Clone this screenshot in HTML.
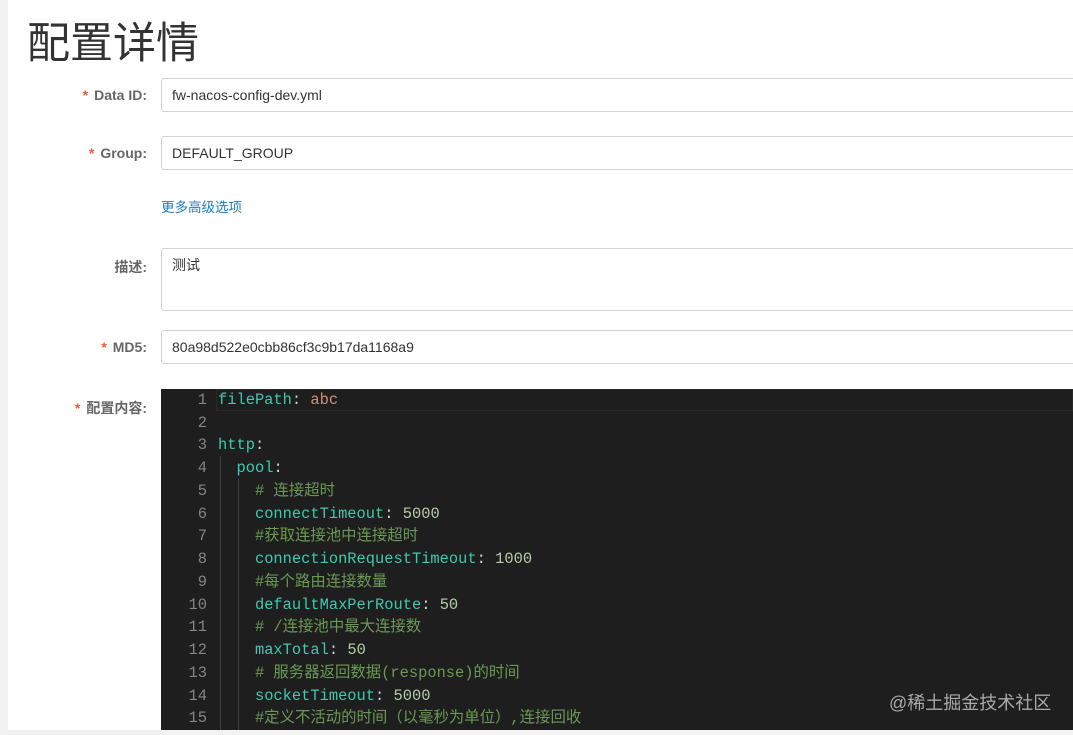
<!DOCTYPE html><html><head><meta charset="utf-8"><style>
body{margin:0;width:1073px;height:735px;overflow:hidden;background:#fff;font-family:"Liberation Sans","Noto Sans CJK SC",sans-serif;position:relative}
.strip{position:absolute;left:0;top:0;width:8px;height:735px;background:#f2f2f2}
.bot{position:absolute;left:0;top:730px;width:1073px;height:5px;background:#f2f2f2}
h1{position:absolute;left:27px;top:16px;margin:0;font-weight:normal;font-size:43px;color:#333;line-height:56px}
.lb{position:absolute;right:926px;font-size:14px;font-weight:bold;color:#666;white-space:nowrap}
.lb i{color:#f1592a;font-style:normal;margin-right:6px}
.in{position:absolute;left:161px;width:930px;border:1px solid #d2d2d2;border-radius:3px;box-sizing:border-box;font-size:14px;color:#333;padding-left:10px}
.lnk{position:absolute;left:161px;top:196px;font-size:13.5px;color:#1e7dbf}
.ed{position:absolute;left:161px;top:389px;width:912px;height:341px;background:#1e1e1e;font-family:"Liberation Mono","Noto Sans CJK SC",monospace;font-size:15.4px}
.l{position:absolute;left:0;height:23px;line-height:23px;white-space:pre;width:912px}
.n{display:inline-block;width:46px;text-align:right;color:#858585}
.c{position:absolute;left:57px}
.k{color:#3dc9b0}.p{color:#d4d4d4}.s{color:#ce9178}.m{color:#b5cea8}.g{color:#6a9955}
.gd{position:absolute;width:1px;background:#404040}
.wm{position:absolute;left:889px;top:689px;font-size:18px;color:#a9a9a9}
</style></head><body>
<div class="strip"></div>
<h1>配置详情</h1>
<div class="lb" style="top:87px"><i>*</i>Data ID:</div>
<div class="in" style="top:78px;height:34px;line-height:32px">fw-nacos-config-dev.yml</div>
<div class="lb" style="top:145px"><i>*</i>Group:</div>
<div class="in" style="top:136px;height:34px;line-height:32px">DEFAULT_GROUP</div>
<div class="lnk">更多高级选项</div>
<div class="lb" style="top:257px">描述:</div>
<div class="in" style="top:248px;height:63px;padding-top:7px;line-height:18px">测试</div>
<div class="lb" style="top:339px"><i>*</i>MD5:</div>
<div class="in" style="top:330px;height:34px;line-height:32px">80a98d522e0cbb86cf3c9b17da1168a9</div>
<div class="lb" style="top:398px"><i>*</i>配置内容:</div>
<div class="ed">
<div style="position:absolute;left:55px;top:0;width:857px;height:22px;border:1px solid #282828;box-sizing:border-box"></div>
<div class="gd" style="left:59px;top:67px;height:274px"></div>
<div class="gd" style="left:77px;top:90px;height:251px"></div>
<div class="l" style="top:0px"><span class="n">1</span><span class="c"><span class="k">filePath</span><span class="p">: </span><span class="s">abc</span></span></div>
<div class="l" style="top:23px"><span class="n">2</span></div>
<div class="l" style="top:45px"><span class="n">3</span><span class="c"><span class="k">http</span><span class="p">:</span></span></div>
<div class="l" style="top:68px"><span class="n">4</span><span class="c">  <span class="k">pool</span><span class="p">:</span></span></div>
<div class="l" style="top:91px"><span class="n">5</span><span class="c g">    # 连接超时</span></div>
<div class="l" style="top:114px"><span class="n">6</span><span class="c">    <span class="k">connectTimeout</span><span class="p">: </span><span class="m">5000</span></span></div>
<div class="l" style="top:136px"><span class="n">7</span><span class="c g">    #获取连接池中连接超时</span></div>
<div class="l" style="top:159px"><span class="n">8</span><span class="c">    <span class="k">connectionRequestTimeout</span><span class="p">: </span><span class="m">1000</span></span></div>
<div class="l" style="top:182px"><span class="n">9</span><span class="c g">    #每个路由连接数量</span></div>
<div class="l" style="top:205px"><span class="n">10</span><span class="c">    <span class="k">defaultMaxPerRoute</span><span class="p">: </span><span class="m">50</span></span></div>
<div class="l" style="top:227px"><span class="n">11</span><span class="c g">    # /连接池中最大连接数</span></div>
<div class="l" style="top:250px"><span class="n">12</span><span class="c">    <span class="k">maxTotal</span><span class="p">: </span><span class="m">50</span></span></div>
<div class="l" style="top:273px"><span class="n">13</span><span class="c g">    # 服务器返回数据(response)的时间</span></div>
<div class="l" style="top:296px"><span class="n">14</span><span class="c">    <span class="k">socketTimeout</span><span class="p">: </span><span class="m">5000</span></span></div>
<div class="l" style="top:318px"><span class="n">15</span><span class="c g">    #定义不活动的时间（以毫秒为单位）,连接回收</span></div>
</div>
<div class="wm">@稀土掘金技术社区</div>
<div class="bot"></div>
</body></html>
